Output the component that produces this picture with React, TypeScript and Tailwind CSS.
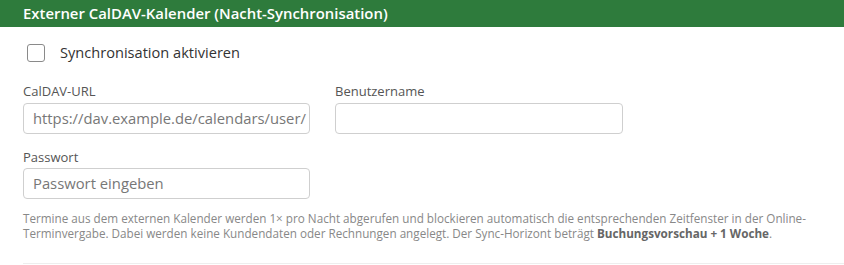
import React from 'react';

const App: React.FC = () => {
  return (
    <div className="w-[844px] h-[265px] bg-white overflow-hidden font-['Open_Sans','Noto_Sans',sans-serif]">
      {/* Header */}
      <div className="h-[27px] bg-[#2e7b3c] flex items-center px-[23px]">
        <span className="text-white font-semibold text-[14.9px]">Externer CalDAV-Kalender (Nacht-Synchronisation)</span>
      </div>

      <div className="pl-[23px]">
        {/* Toggle */}
        <label className="flex items-center gap-[15px] pl-[4px] mt-[17px] h-[18px]">
          <span className="w-[18px] h-[18px] rounded-[3px] border border-[#8a8a8a] bg-white shrink-0" />
          <span className="text-[14.6px] text-[#333]">Synchronisation aktivieren</span>
        </label>

        {/* Fields */}
        <div className="flex gap-[25px] mt-[20px]">
          <div className="w-[287px]">
            <div className="text-[13px] text-[#555] leading-[18px] mb-[3px]">CalDAV-URL</div>
            <div className="h-[31px] rounded-[4px] border border-[#cfcfcf] px-[9px] flex items-center text-[14.8px] text-[#777] overflow-hidden whitespace-nowrap">
              https://dav.example.de/calendars/user/
            </div>
          </div>
          <div className="w-[288px]">
            <div className="text-[13px] text-[#555] leading-[18px] mb-[3px]">Benutzername</div>
            <div className="h-[31px] rounded-[4px] border border-[#cfcfcf]" />
          </div>
        </div>

        <div className="w-[287px] mt-[14px]">
          <div className="text-[13px] text-[#555] leading-[18px] mb-[2px]">Passwort</div>
          <div className="h-[31px] rounded-[4px] border border-[#cfcfcf] px-[9px] flex items-center text-[14.8px] text-[#777]">
            Passwort eingeben
          </div>
        </div>

        <p className="mt-[12px] text-[11.7px] leading-[15px] text-[#888] whitespace-nowrap">
          Termine aus dem externen Kalender werden 1× pro Nacht abgerufen und blockieren automatisch die entsprechenden Zeitfenster in der Online-
          <br />
          Terminvergabe. Dabei werden keine Kundendaten oder Rechnungen angelegt. Der Sync-Horizont beträgt{' '}
          <strong className="font-bold text-[#666]">Buchungsvorschau + 1 Woche</strong>.
        </p>

        <div className="mt-[22px] border-t border-[#eee]" />
      </div>
    </div>
  );
};

export default App;
